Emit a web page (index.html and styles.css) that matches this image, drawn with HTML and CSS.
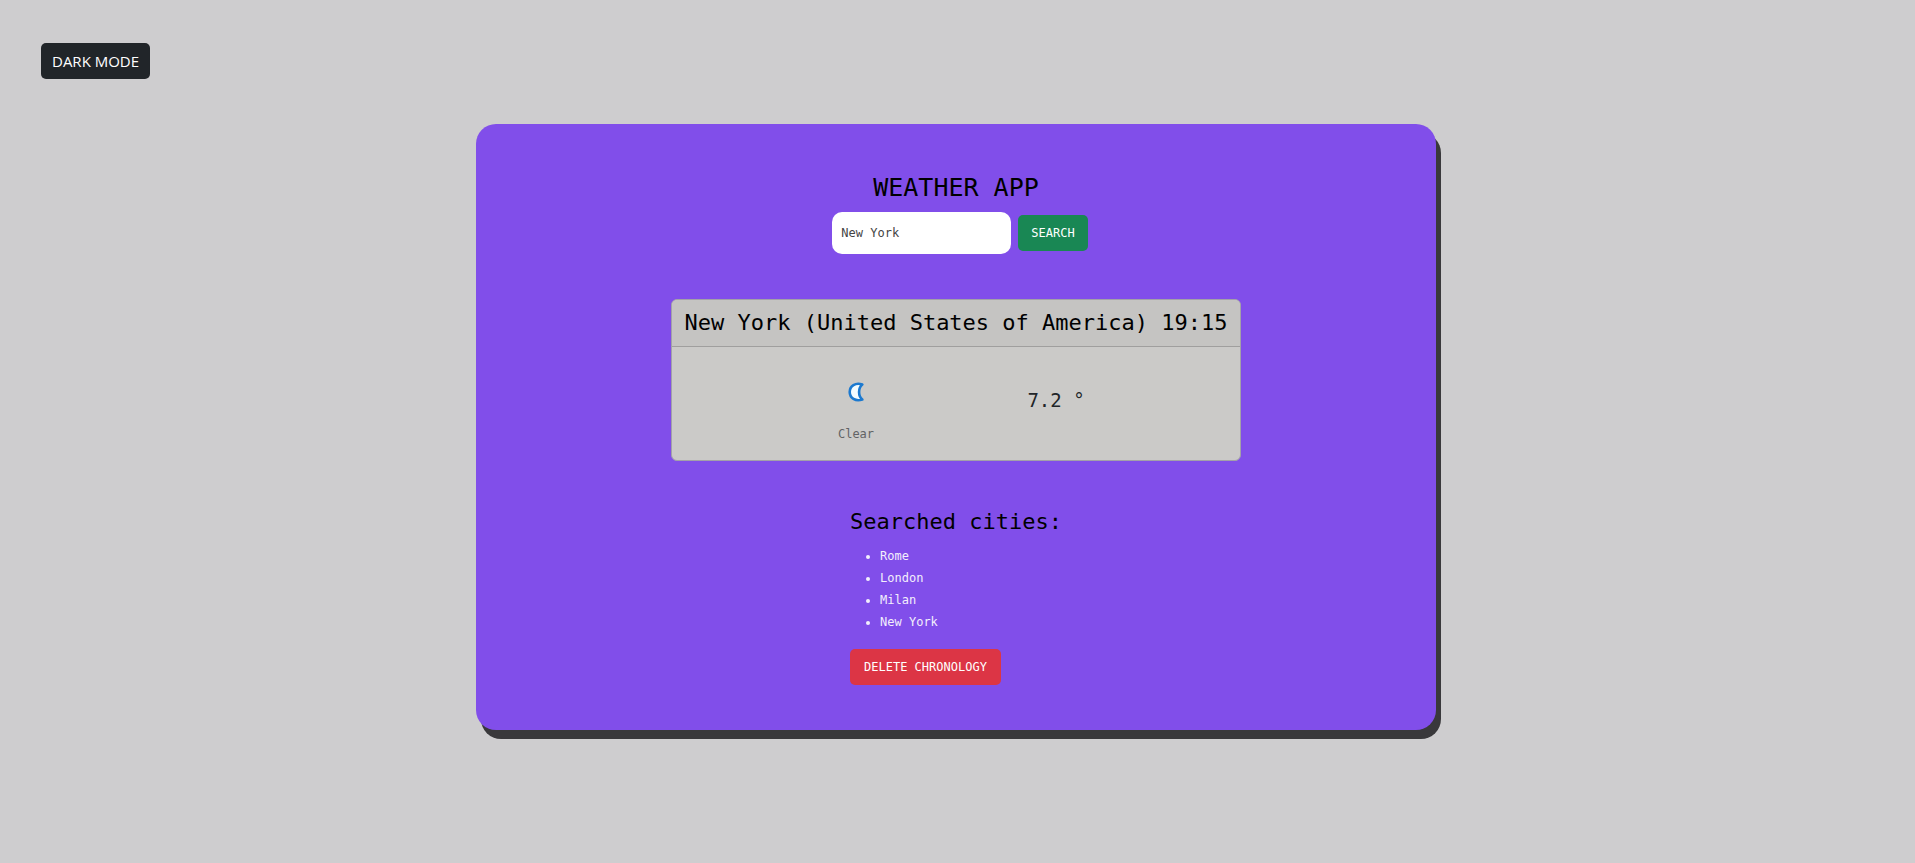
FILE: index.html
```
<!DOCTYPE html>
<html lang="en">
<head>
<meta charset="utf-8">
<meta name="viewport" content="width=device-width, initial-scale=1">
<title>Weather App</title>
<link rel="stylesheet" href="styles.css">
</head>
<body>
<header class="toolbar">
  <button class="btn btn-dark" type="button">DARK MODE</button>
</header>
<main class="panel">
  <h1 class="title">WEATHER APP</h1>
  <form class="search">
    <input class="search-input" type="text" value="New York" aria-label="City">
    <button class="btn btn-green" type="button">SEARCH</button>
  </form>
  <section class="card">
    <h2 class="card-header">New York (United States of America) 19:15</h2>
    <div class="card-body">
      <div class="condition">
        <svg class="moon" viewBox="0 0 16 20" aria-hidden="true">
          <path d="M14.300 2.500C7.500 .2 1.700 4 1.700 10s5.800 9.800 12.600 7.500C10 14 10 6 14.300 2.500Z" fill="#f4fcff" stroke="#1c79cf" stroke-width="2.600" stroke-linejoin="round"/>
        </svg>
        <p class="condition-label">Clear</p>
      </div>
      <p class="temperature">7.2 °</p>
    </div>
  </section>
  <section class="history">
    <h2 class="history-title">Searched cities:</h2>
    <ul class="cities">
      <li>Rome</li>
      <li>London</li>
      <li>Milan</li>
      <li>New York</li>
    </ul>
    <button class="btn btn-red" type="button">DELETE CHRONOLOGY</button>
  </section>
</main>
</body>
</html>
```
FILE: styles.css
```
* {
  box-sizing: border-box;
}

body {
  margin: 0;
  padding: 43px 3px 43px 0;
  min-height: 100vh;
  background: #cecdcf;
  font-family: "DejaVu Sans Mono", monospace;
  font-size: 12px;
  line-height: 22px;
}

h1, h2, p, ul {
  margin: 0;
  font-weight: 400;
}

.toolbar {
  padding-left: 41px;
  margin-bottom: 45px;
}

.btn {
  display: block;
  height: 36px;
  padding: 0 13px;
  border: 0;
  border-radius: 5px;
  color: #fff;
  font-family: inherit;
  font-size: 12px;
  cursor: pointer;
}

.btn-dark {
  padding: 0 11px;
  background: #212529;
  font-family: "Open Sans", "Noto Sans", sans-serif;
  font-size: 15px;
}

.btn-green {
  background: #198754;
}

.btn-red {
  padding: 0 14px;
  background: #dc3545;
}

.panel {
  display: flex;
  flex-direction: column;
  align-items: center;
  max-width: 960px;
  margin: 0 auto;
  padding: 46px 16px 45px;
  border-radius: 20px;
  background: #814eea;
  box-shadow: 5px 9px 0 #39383b;
}

.title {
  color: #000;
  font-size: 25px;
  line-height: 36px;
}

.search {
  display: flex;
  align-items: center;
  gap: 7px;
  margin: 6px 0 45px;
  padding-left: 8px;
}

.search-input {
  width: 179px;
  height: 42px;
  padding: 0 9px;
  border: 0;
  border-radius: 10px;
  background: #fff;
  color: #444;
  font-family: inherit;
  font-size: 12px;
}

.card {
  max-width: 100%;
  border: 1px solid #a3a1a8;
  border-radius: 6px;
  background: #cbcac8;
}

.card-header {
  padding: 7px 12px;
  border-bottom: 1px solid #a09f9e;
  border-radius: 5px 5px 0 0;
  background: #c5c4c2;
  color: #000;
  font-size: 22px;
  line-height: 32px;
}

.card-body {
  display: grid;
  grid-template-columns: 200px 200px;
  justify-content: center;
  align-items: center;
  padding: 35px 0 15px;
}

.condition {
  display: flex;
  flex-direction: column;
  align-items: center;
  gap: 21px;
}

.moon {
  width: 16px;
  height: 20px;
}

.condition-label {
  color: #626365;
}

.temperature {
  color: #212529;
  font-size: 19px;
  text-align: center;
  padding-bottom: 28px;
}

.history {
  margin-top: 45px;
}

.history-title {
  color: #000;
  font-size: 22px;
  line-height: 32px;
}

.cities {
  margin: 7px 0 16px;
  padding-left: 30px;
  color: #f3effc;
}

@media (max-width: 640px) {
  .card-header {
    font-size: 16px;
  }

  .card-body {
    grid-template-columns: 1fr 1fr;
  }
}
```
